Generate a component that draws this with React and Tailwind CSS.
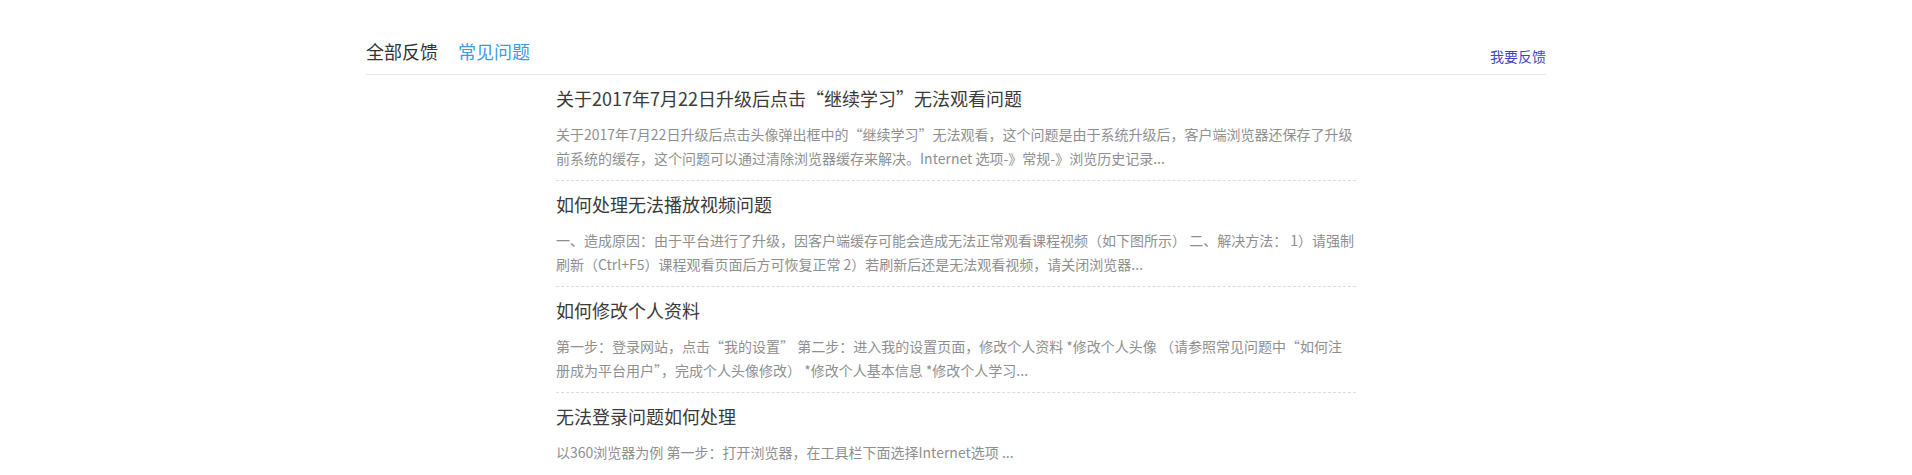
import React from "react";

const items = [
  {
    title: "关于2017年7月22日升级后点击“继续学习”无法观看问题",
    lines: [
      "关于2017年7月22日升级后点击头像弹出框中的“继续学习”无法观看，这个问题是由于系统升级后，客户端浏览器还保存了升级",
      "前系统的缓存，这个问题可以通过清除浏览器缓存来解决。Internet 选项-》常规-》浏览历史记录...",
    ],
  },
  {
    title: "如何处理无法播放视频问题",
    lines: [
      "一、造成原因：由于平台进行了升级，因客户端缓存可能会造成无法正常观看课程视频（如下图所示） 二、解决方法： 1）请强制",
      "刷新（Ctrl+F5）课程观看页面后方可恢复正常 2）若刷新后还是无法观看视频，请关闭浏览器...",
    ],
  },
  {
    title: "如何修改个人资料",
    lines: [
      "第一步：登录网站，点击“我的设置” 第二步：进入我的设置页面，修改个人资料 *修改个人头像 （请参照常见问题中“如何注",
      "册成为平台用户”，完成个人头像修改） *修改个人基本信息 *修改个人学习...",
    ],
  },
  {
    title: "无法登录问题如何处理",
    lines: ["以360浏览器为例 第一步：打开浏览器，在工具栏下面选择Internet选项 ..."],
  },
];

export default function App() {
  return (
    <div
      className="min-h-[475px] bg-white"
      style={{ fontFamily: '"Noto Sans CJK SC", "Microsoft YaHei", sans-serif' }}
    >
      <div className="mx-auto w-[1180px] pt-[39px]">
        <div className="flex items-end justify-between border-b border-[#e5e5e5] pb-[8px]">
          <div className="flex items-end gap-[20px] mb-[3px]">
            <span className="text-[18px] leading-[24px] text-[#333]">全部反馈</span>
            <span className="text-[18px] leading-[24px] text-[#3a9ce6]">常见问题</span>
          </div>
          <a className="text-[14px] leading-[20px] text-[#3f45c9]">我要反馈</a>
        </div>
        <div className="mx-auto w-[800px]">
          {items.map((it, i) => (
            <div
              key={i}
              className={
                "pt-[11px] pb-[10px] " +
                (i < items.length - 1 ? "border-b border-dashed border-[#dcdcdc]" : "")
              }
            >
              <div className="text-[18px] leading-[24px] text-[#3a3a3a] whitespace-nowrap">
                {it.title}
              </div>
              <div className="mt-[12px] text-[14px] leading-[24px] text-[#8f8f8f] whitespace-nowrap">
                {it.lines.map((l, j) => (
                  <div key={j}>{l}</div>
                ))}
              </div>
            </div>
          ))}
        </div>
      </div>
    </div>
  );
}
